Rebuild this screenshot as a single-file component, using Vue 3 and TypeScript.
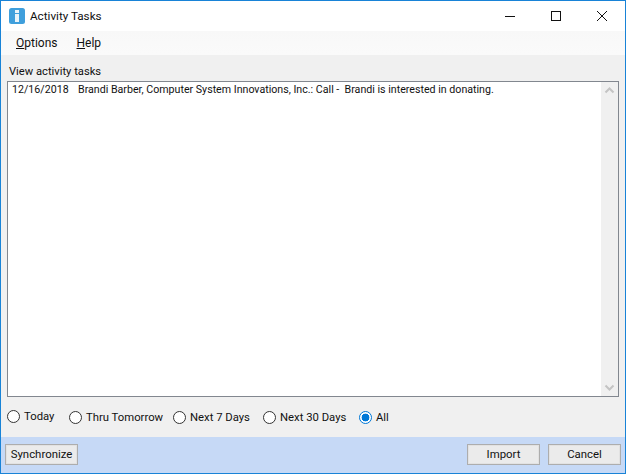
<script setup lang="ts">
const options: { label: string; checked: boolean; width: number }[] = [
  { label: 'Today', checked: false, width: 62 },
  { label: 'Thru Tomorrow', checked: false, width: 104 },
  { label: 'Next 7 Days', checked: false, width: 90 },
  { label: 'Next 30 Days', checked: false, width: 96 },
  { label: 'All', checked: true, width: 40 },
]
</script>

<template>
  <div class="window">
    <header class="titlebar">
      <svg class="appicon" width="16" height="16" viewBox="0 0 16 16">
        <rect x="0" y="0" width="16" height="16" rx="2.5" fill="#3f9fdc" />
        <rect x="6" y="2" width="4" height="3" fill="#e8f3fa" />
        <rect x="6" y="6" width="4" height="8" fill="#e8f3fa" />
      </svg>
      <span class="title">Activity Tasks</span>
      <div class="controls">
        <svg width="46" height="30" viewBox="0 0 46 30"><path d="M18 15.5H28" stroke="#111" fill="none" /></svg>
        <svg width="46" height="30" viewBox="0 0 46 30"><rect x="18.5" y="10.5" width="9" height="9" stroke="#111" fill="none" /></svg>
        <svg width="46" height="30" viewBox="0 0 46 30"><path d="M18 10L28 20M28 10L18 20" stroke="#111" fill="none" /></svg>
      </div>
    </header>

    <nav class="menu">
      <span class="menu-item"><u>O</u>ptions</span>
      <span class="menu-item"><u>H</u>elp</span>
    </nav>

    <main class="content">
      <label class="caption">View activity tasks</label>
      <div class="listbox">
        <div class="rows">
          <div class="row"><span class="date">12/16/2018</span><span>Brandi Barber, Computer System Innovations, Inc.: Call -&nbsp; Brandi is interested in donating.</span></div>
        </div>
        <div class="scrollbar">
          <svg width="17" height="17" viewBox="0 0 17 17"><path d="M4.5 10.5L8.5 6.5L12.5 10.5" stroke="#c4c4c4" stroke-width="2" fill="none" /></svg>
          <svg width="17" height="17" viewBox="0 0 17 17"><path d="M4.5 6.5L8.5 10.5L12.5 6.5" stroke="#c4c4c4" stroke-width="2" fill="none" /></svg>
        </div>
      </div>
      <div class="radios">
        <div v-for="o in options" :key="o.label" class="radio" :style="{ width: o.width + 'px' }">
          <span class="dot" :class="{ on: o.checked }"></span>
          <span>{{ o.label }}</span>
        </div>
      </div>
    </main>

    <footer class="footer">
      <button class="btn">Synchronize</button>
      <div class="spacer"></div>
      <button class="btn">Import</button>
      <button class="btn">Cancel</button>
    </footer>
  </div>
</template>

<style>
html, body { margin: 0; padding: 0; }
</style>

<style scoped>
.window {
  width: 626px;
  height: 474px;
  box-sizing: border-box;
  border: 1px solid #1883d7;
  display: flex;
  flex-direction: column;
  background: #f0f0f0;
  font-family: Roboto, sans-serif;
  font-size: 11.3px;
  color: #111;
  overflow: hidden;
}
.titlebar {
  height: 30px;
  background: #fff;
  display: flex;
  align-items: center;
  padding-left: 8px;
  flex: none;
}
.appicon { flex: none; }
.title { margin-left: 5px; font-size: 11.7px; }
.controls { margin-left: auto; display: flex; }
.menu {
  height: 24px;
  flex: none;
  background: linear-gradient(#f8f8f8, #fafafa);
  display: flex;
  align-items: center;
  padding-left: 15px;
  box-sizing: border-box;
  gap: 19px;
  font-size: 12px;
}
.content {
  flex: 1;
  display: flex;
  flex-direction: column;
  padding: 8px 6px 0 6px;
  min-height: 0;
}
.caption { height: 18px; line-height: 18px; padding-left: 2px; font-size: 11.2px; }
.listbox {
  height: 316px;
  box-sizing: border-box;
  border: 1px solid #82878f;
  background: #fff;
  display: flex;
  flex: none;
}
.rows { flex: 1; padding: 0 4px; }
.row { height: 16px; line-height: 15px; white-space: nowrap; font-size: 10.65px; }
.date { display: inline-block; width: 66px; }
.scrollbar {
  width: 17px;
  background: #f0f0f0;
  display: flex;
  flex-direction: column;
  justify-content: space-between;
}
.radios {
  display: flex;
  align-items: center;
  height: 40px;
}
.radio {
  display: flex;
  align-items: center;
  gap: 4px;
  flex: none;
  white-space: nowrap;
}
.radio:first-child { padding-bottom: 2px; }
.dot {
  width: 13px;
  height: 13px;
  box-sizing: border-box;
  border: 1px solid #333;
  border-radius: 50%;
  background: #fff;
  flex: none;
}
.dot.on {
  border-color: #0078d7;
  background: radial-gradient(circle, #0078d7 0 3.6px, #fff 4.2px);
}
.footer {
  height: 36px;
  flex: none;
  background: #c6d9f6;
  display: flex;
  align-items: center;
  padding: 0 4px 1px 4px;
  box-sizing: border-box;
  gap: 8px;
}
.spacer { flex: 1; }
.btn {
  width: 73px;
  height: 21px;
  box-sizing: border-box;
  border: 1px solid #adadad;
  background: #ebebeb;
  box-shadow: inset 0 0 0 1px #e2e2e2;
  font: inherit;
  font-size: 11.4px;
  color: #111;
  padding: 0 0 2px;
}
</style>
